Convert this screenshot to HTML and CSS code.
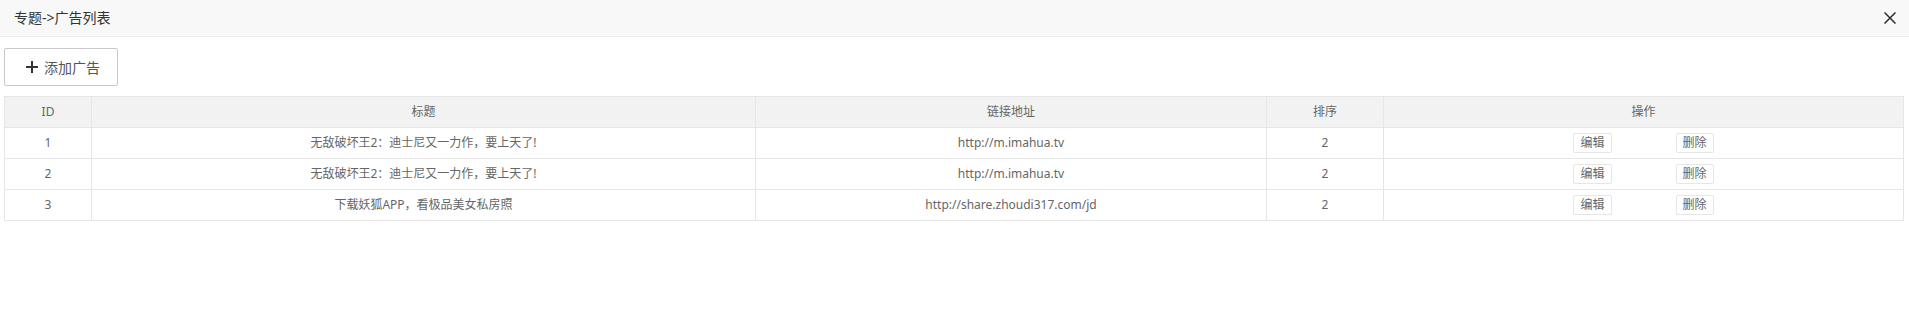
FILE: index.html
```html
<!DOCTYPE html>
<html lang="zh-CN">
<head>
	<meta charset="utf-8">
	<title>广告列表</title>
	<link rel="stylesheet" href="styles.css">
</head>
<body>
	<div class="layer-title">
		<span>专题-&gt;广告列表</span>
		<span class="layer-close" title="关闭">
			<svg width="12" height="12" viewBox="0 0 12 12"><path d="M0.5 0.5 L11.5 11.5 M11.5 0.5 L0.5 11.5" stroke="#2b2b35" stroke-width="1.5" fill="none"/></svg>
		</span>
	</div>
	<div class="content">
		<button class="btn-add" type="button">
			<svg width="12" height="12" viewBox="0 0 12 12"><path d="M6 0 V12 M0 6 H12" stroke="#333" stroke-width="2" fill="none"/></svg>
			添加广告
		</button>
		<table class="grid">
			<colgroup>
				<col class="c-id">
				<col class="c-title">
				<col class="c-link">
				<col class="c-sort">
				<col>
			</colgroup>
			<thead>
				<tr>
					<th>ID</th>
					<th>标题</th>
					<th>链接地址</th>
					<th>排序</th>
					<th>操作</th>
				</tr>
			</thead>
			<tbody>
				<tr>
					<td>1</td>
					<td>无敌破坏王2：迪士尼又一力作，要上天了!</td>
					<td>http://m.imahua.tv</td>
					<td>2</td>
					<td><div class="ops"><button class="btn-xs">编辑</button><button class="btn-xs">删除</button></div></td>
				</tr>
				<tr>
					<td>2</td>
					<td>无敌破坏王2：迪士尼又一力作，要上天了!</td>
					<td>http://m.imahua.tv</td>
					<td>2</td>
					<td><div class="ops"><button class="btn-xs">编辑</button><button class="btn-xs">删除</button></div></td>
				</tr>
				<tr>
					<td>3</td>
					<td>下载妖狐APP，看极品美女私房照</td>
					<td>http://share.zhoudi317.com/jd</td>
					<td>2</td>
					<td><div class="ops"><button class="btn-xs">编辑</button><button class="btn-xs">删除</button></div></td>
				</tr>
			</tbody>
		</table>
	</div>
</body>
</html>
```

FILE: styles.css
```css
body { margin: 0; font-family: "Noto Sans", "Noto Sans CJK SC", sans-serif; font-size: 12px; color: #666; background: #fff; }

.layer-title { display: flex; justify-content: space-between; align-items: center; height: 36px; padding: 0 13px 0 14px; background: #f8f8f8; border-bottom: 1px solid #eee; font-size: 14px; color: #333; }

.layer-title span { line-height: 32px; }

.layer-close { display: flex; align-items: center; height: 32px; cursor: pointer; }

.content { padding: 11px 5px 0 4px; }

.btn-add { display: flex; align-items: center; height: 38px; padding: 0 17px 0 21px; border: 1px solid #c9c9c9; border-radius: 2px; background: #fff; font-family: inherit; font-size: 14px; color: #555; cursor: pointer; }

.btn-add svg { margin-right: 6px; }

.grid { width: 100%; margin-top: 10px; border-collapse: collapse; table-layout: fixed; }

.c-id { width: 87px; }
.c-title { width: 664px; }
.c-link { width: 511px; }
.c-sort { width: 117px; }

.grid th, .grid td { height: 30px; padding: 0 10px; border: 1px solid #e6e6e6; text-align: center; font-weight: normal; line-height: 20px; color: #666; }

.grid th { background: #f2f2f2; }

.ops { display: flex; justify-content: center; gap: 64px; }

.btn-xs { height: 20px; padding: 0 6px; border: 1px solid #e6e6e6; border-radius: 2px; background: #fff; font-family: inherit; font-size: 12px; line-height: 18px; color: #666; cursor: pointer; }
```
